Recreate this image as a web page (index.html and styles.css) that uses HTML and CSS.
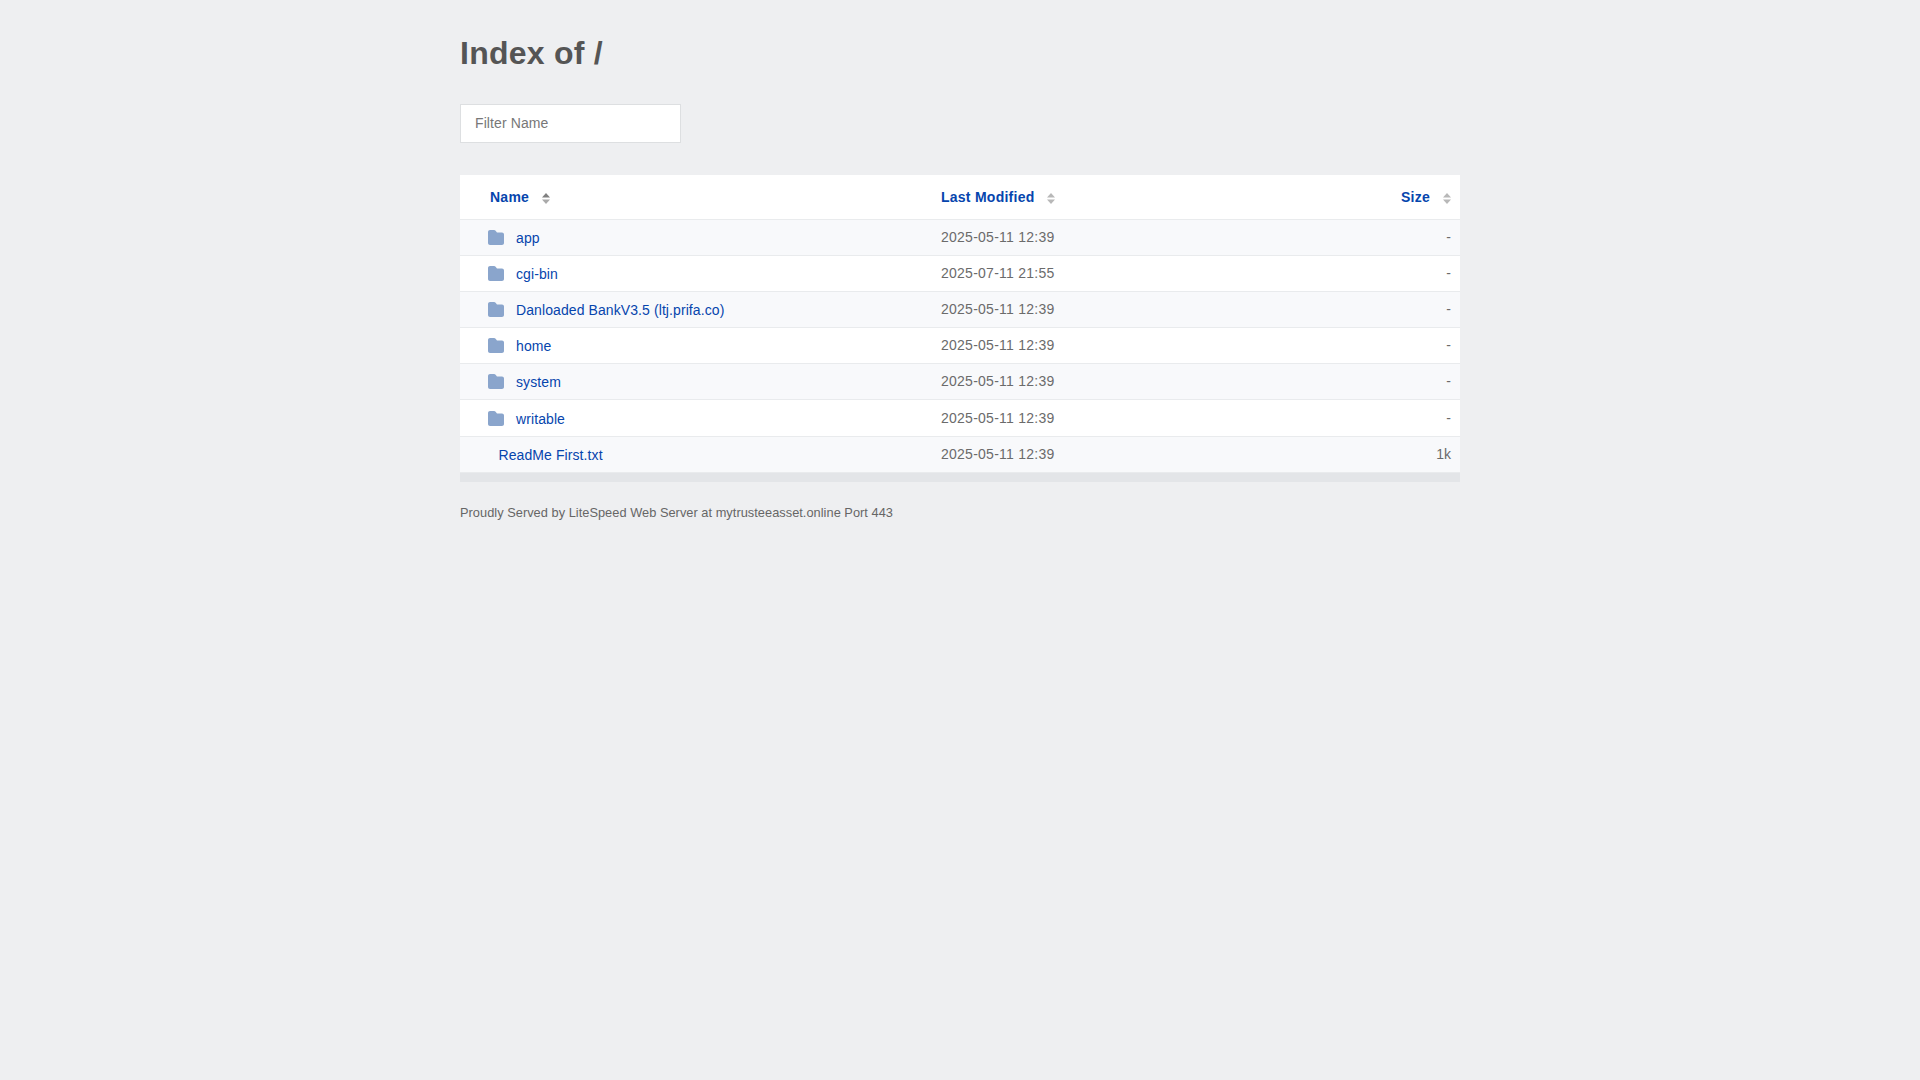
FILE: index.html
```html
<!DOCTYPE html>
<html lang="en">
<head>
<meta charset="utf-8">
<title>Index of /</title>
<link rel="stylesheet" href="styles.css">
</head>
<body>
<main class="wrap">
  <h1 class="title">Index of /</h1>
  <input class="filter" type="text" placeholder="Filter Name">
  <table class="listing">
    <thead>
      <tr>
        <th class="col-name"><a href="#">Name</a><svg class="sort active" viewBox="0 0 8 11"><path class="up" d="M0 4.500 4 0l4 4.500z"/><path class="down" d="M0 6.500h8L4 11z"/></svg></th>
        <th class="col-date"><a href="#">Last Modified</a><svg class="sort" viewBox="0 0 8 11"><path class="up" d="M0 4.500 4 0l4 4.500z"/><path class="down" d="M0 6.500h8L4 11z"/></svg></th>
        <th class="col-size"><a href="#">Size</a><svg class="sort" viewBox="0 0 8 11"><path class="up" d="M0 4.500 4 0l4 4.500z"/><path class="down" d="M0 6.500h8L4 11z"/></svg></th>
      </tr>
    </thead>
    <tbody>
      <tr><td class="col-name"><svg class="folder" viewBox="0 0 16 15"><path d="M2 0h4c.7 0 1.200.2 1.600.7L9 2.500h5c1.100 0 2 .9 2 2V13c0 1.100-.9 2-2 2H2c-1.100 0-2-.9-2-2V2C0 .9.900 0 2 0z"/></svg><a href="#">app</a></td><td class="col-date">2025-05-11 12:39</td><td class="col-size">-</td></tr>
      <tr><td class="col-name"><svg class="folder" viewBox="0 0 16 15"><path d="M2 0h4c.7 0 1.200.2 1.600.7L9 2.500h5c1.100 0 2 .9 2 2V13c0 1.100-.9 2-2 2H2c-1.100 0-2-.9-2-2V2C0 .9.900 0 2 0z"/></svg><a href="#">cgi-bin</a></td><td class="col-date">2025-07-11 21:55</td><td class="col-size">-</td></tr>
      <tr><td class="col-name"><svg class="folder" viewBox="0 0 16 15"><path d="M2 0h4c.7 0 1.200.2 1.600.7L9 2.500h5c1.100 0 2 .9 2 2V13c0 1.100-.9 2-2 2H2c-1.100 0-2-.9-2-2V2C0 .9.900 0 2 0z"/></svg><a href="#">Danloaded BankV3.5 (ltj.prifa.co)</a></td><td class="col-date">2025-05-11 12:39</td><td class="col-size">-</td></tr>
      <tr><td class="col-name"><svg class="folder" viewBox="0 0 16 15"><path d="M2 0h4c.7 0 1.200.2 1.600.7L9 2.500h5c1.100 0 2 .9 2 2V13c0 1.100-.9 2-2 2H2c-1.100 0-2-.9-2-2V2C0 .9.900 0 2 0z"/></svg><a href="#">home</a></td><td class="col-date">2025-05-11 12:39</td><td class="col-size">-</td></tr>
      <tr><td class="col-name"><svg class="folder" viewBox="0 0 16 15"><path d="M2 0h4c.7 0 1.200.2 1.600.7L9 2.500h5c1.100 0 2 .9 2 2V13c0 1.100-.9 2-2 2H2c-1.100 0-2-.9-2-2V2C0 .9.900 0 2 0z"/></svg><a href="#">system</a></td><td class="col-date">2025-05-11 12:39</td><td class="col-size">-</td></tr>
      <tr class="tall"><td class="col-name"><svg class="folder" viewBox="0 0 16 15"><path d="M2 0h4c.7 0 1.200.2 1.600.7L9 2.500h5c1.100 0 2 .9 2 2V13c0 1.100-.9 2-2 2H2c-1.100 0-2-.9-2-2V2C0 .9.900 0 2 0z"/></svg><a href="#">writable</a></td><td class="col-date">2025-05-11 12:39</td><td class="col-size">-</td></tr>
      <tr><td class="col-name file"><a href="#">ReadMe First.txt</a></td><td class="col-date">2025-05-11 12:39</td><td class="col-size">1k</td></tr>
    </tbody>
  </table>
  <div class="tfoot"></div>
  <p class="served">Proudly Served by LiteSpeed Web Server at mytrusteeasset.online Port 443</p>
</main>
</body>
</html>
```
FILE: styles.css
```css
* { box-sizing: border-box; }
html, body { margin: 0; padding: 0; }
body {
  background: #eeeff1;
  color: #6b6b6b;
  font-family: "Liberation Sans", Arial, sans-serif;
  font-size: 14px;
  text-rendering: optimizeSpeed;
}
.wrap { width: 1000px; margin: 0 auto; }
.title {
  margin: 0;
  padding: 33px 0 0;
  font-size: 32px;
  line-height: 40px;
  letter-spacing: .25px;
  font-weight: 700;
  color: #555;
}
.filter {
  display: block;
  width: 221px;
  height: 39px;
  margin: 31px 0 32px;
  padding: 0 14px 2px;
  border: 1px solid #dddfe1;
  background: #fff;
  font: 14px "Liberation Sans", Arial, sans-serif;
  letter-spacing: .1px;
  color: #666;
  outline: none;
}
.filter::placeholder { color: #777; opacity: 1; }
.listing {
  width: 1000px;
  border-collapse: separate;
  border-spacing: 0;
  table-layout: fixed;
}
.listing a { color: #0645ad; text-decoration: none; }
.listing th {
  height: 45px;
  padding: 0;
  background: #fff;
  border-bottom: 1px solid #e9ebed;
  text-align: left;
  font-weight: 700;
  letter-spacing: .25px;
}
.listing td {
  height: 36px;
  padding: 0;
  border-bottom: 1px solid #e9ebed;
}
.listing .tall td { height: 37px; }
.listing td.col-name { letter-spacing: .09px; }
.listing td.col-date { letter-spacing: .25px; padding-bottom: 1px; }
.listing td.col-size { padding-bottom: 1px; }
.listing .tall td.col-name { padding-top: 1px; }
.listing tbody tr:nth-child(odd) td { background: #f8f9fb; }
.listing tbody tr:nth-child(even) td { background: #fff; }
.col-name { width: 480px; padding-left: 28px !important; }
th.col-name { padding-left: 30px !important; }
.col-date { width: 370px; padding-left: 1px !important; }
.col-size { width: 150px; text-align: right !important; padding-right: 9px !important; }
.sort { width: 8px; height: 11px; margin-left: 13px; vertical-align: -2px; }
.sort .up, .sort .down { fill: #b8b8b8; }
.sort.active .up { fill: #808080; }
.sort.active .down { fill: #aaa; }
.folder { width: 16px; height: 15px; margin-right: 12px; vertical-align: -2px; fill: #8aa5cc; }
.col-name.file { padding-left: 38.500px !important; }
.tfoot { height: 9px; background: #e3e5e8; }
.served { margin: 22px 0 0; font-size: 12.8px; letter-spacing: .03px; line-height: 17px; color: #666; }
```
